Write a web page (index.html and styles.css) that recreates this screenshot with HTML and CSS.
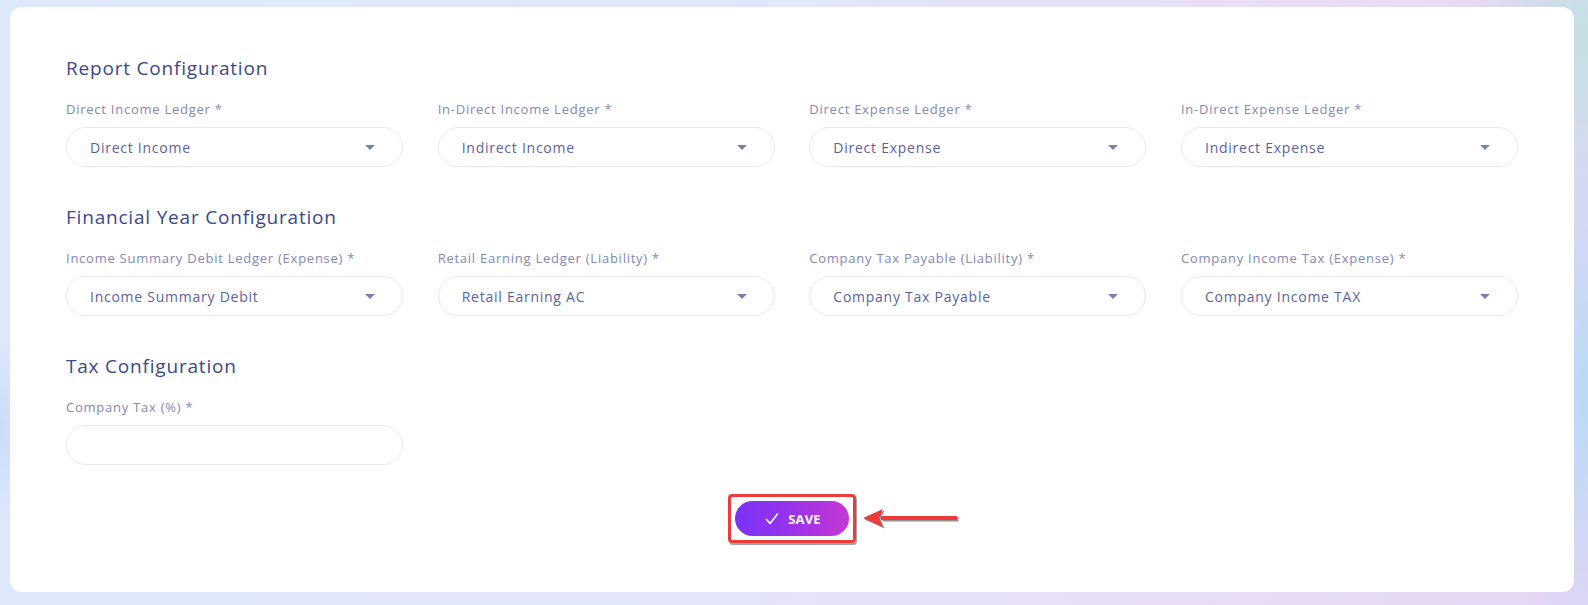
FILE: index.html
```html
<!DOCTYPE html>
<html lang="en">
<head>
<meta charset="utf-8">
<title>Configuration</title>
<link rel="stylesheet" href="styles.css">
</head>
<body>
<div class="page">
  <div class="card">
    <section class="section">
      <h2 class="section-title">Report Configuration</h2>
      <div class="grid">
        <div class="field">
          <label class="field-label">Direct Income Ledger *</label>
          <div class="select"><span class="select-value">Direct Income</span><span class="caret"></span></div>
        </div>
        <div class="field">
          <label class="field-label">In-Direct Income Ledger *</label>
          <div class="select"><span class="select-value">Indirect Income</span><span class="caret"></span></div>
        </div>
        <div class="field">
          <label class="field-label">Direct Expense Ledger *</label>
          <div class="select"><span class="select-value">Direct Expense</span><span class="caret"></span></div>
        </div>
        <div class="field">
          <label class="field-label">In-Direct Expense Ledger *</label>
          <div class="select"><span class="select-value">Indirect Expense</span><span class="caret"></span></div>
        </div>
      </div>
    </section>
    <section class="section">
      <h2 class="section-title">Financial Year Configuration</h2>
      <div class="grid">
        <div class="field">
          <label class="field-label">Income Summary Debit Ledger (Expense) *</label>
          <div class="select"><span class="select-value">Income Summary Debit</span><span class="caret"></span></div>
        </div>
        <div class="field">
          <label class="field-label">Retail Earning Ledger (Liability) *</label>
          <div class="select"><span class="select-value">Retail Earning AC</span><span class="caret"></span></div>
        </div>
        <div class="field">
          <label class="field-label">Company Tax Payable (Liability) *</label>
          <div class="select"><span class="select-value">Company Tax Payable</span><span class="caret"></span></div>
        </div>
        <div class="field">
          <label class="field-label">Company Income Tax (Expense) *</label>
          <div class="select"><span class="select-value">Company Income TAX</span><span class="caret"></span></div>
        </div>
      </div>
    </section>
    <section class="section">
      <h2 class="section-title">Tax Configuration</h2>
      <div class="grid">
        <div class="field">
          <label class="field-label">Company Tax (%) *</label>
          <input class="input" type="text">
        </div>
      </div>
    </section>
    <div class="actions">
      <div class="highlight">
        <button class="save-btn" type="button">
          <svg class="check" width="14" height="12" viewBox="0 0 14 12"><polyline points="1.5,6.5 5,10.5 12.5,1" fill="none" stroke="#fff" stroke-width="1.6" stroke-linecap="round" stroke-linejoin="round"/></svg>
          <span>SAVE</span>
        </button>
        <svg class="arrow" width="100" height="26" viewBox="0 0 100 26">
          <g transform="translate(1.5,1.5)" fill="#6f6f6f" opacity="0.75">
            <rect x="18" y="9" width="76" height="4"/>
            <polygon points="0,11 20,2 16,11 20,20"/>
          </g>
          <g fill="#ee3a3a">
            <rect x="18" y="9" width="76" height="4"/>
            <polygon points="0,11 20,2 16,11 20,20"/>
          </g>
        </svg>
      </div>
    </div>
  </div>
</div>
</body>
</html>
```

FILE: styles.css
```css
* { box-sizing: border-box; }

html, body {
  margin: 0;
  height: 605px;
  overflow: hidden;
}

body {
  font-family: "Open Sans", "Noto Sans", sans-serif;
  background:
    radial-gradient(ellipse 90px 260px at 1588px 390px, #b9d9f6 0%, rgba(185,217,246,0) 100%),
    radial-gradient(ellipse 120px 200px at 1588px 40px, #c3dfe3 0%, rgba(195,223,227,0) 100%),
    radial-gradient(ellipse 60px 90px at 0px 430px, #cadcfa 0%, rgba(202,220,250,0) 100%),
    linear-gradient(100deg, #dde8fb 0%, #e3e6fa 45%, #e9dcf4 80%, #e3d5f3 100%);
}

.page {
  padding: 7px 14px 13px 10px;
  height: 605px;
}

.card {
  background: #ffffff;
  border-radius: 12px;
  height: 585px;
  padding: 49px 56px 0;
}

.section + .section {
  margin-top: 38px;
}

.section-title {
  margin: 0 0 19px;
  font-size: 19px;
  line-height: 24px;
  font-weight: 500;
  letter-spacing: 0.8px;
  color: #3b488b;
}

.grid {
  display: grid;
  grid-template-columns: repeat(4, 1fr);
  column-gap: 34.67px;
}

.field {
  display: flex;
  flex-direction: column;
}

.field-label {
  font-size: 13px;
  line-height: 20px;
  font-weight: 500;
  letter-spacing: 0.75px;
  color: #8388b4;
  margin-bottom: 8px;
}

.select, .input {
  height: 40px;
  border: 1px solid #e7e9f2;
  border-radius: 20px;
  background: #fff;
}

.select {
  display: flex;
  align-items: center;
  justify-content: space-between;
  padding: 0 27px 0 23px;
}

.select-value {
  font-size: 14px;
  letter-spacing: 0.75px;
  color: #5a62a3;
}

.caret {
  width: 0;
  height: 0;
  border-left: 5px solid transparent;
  border-right: 5px solid transparent;
  border-top: 5px solid #7a7fae;
}

.input {
  width: 100%;
  font: inherit;
  outline: none;
}

.actions {
  display: flex;
  justify-content: center;
  margin-top: 29px;
}

.highlight {
  position: relative;
  border: 3px solid #ec3d3d;
  border-radius: 4px;
  padding: 4px;
  box-shadow: 1px 2px 0 rgba(90,90,90,0.55);
}

.save-btn {
  display: flex;
  align-items: center;
  justify-content: center;
  gap: 9px;
  width: 114px;
  height: 35px;
  border: 0;
  border-radius: 18px;
  background: linear-gradient(90deg, #7a33f6 0%, #9a32ea 50%, #c639d4 100%);
  color: #fff;
  font-family: inherit;
  font-size: 13px;
  font-weight: 700;
  letter-spacing: 0.2px;
  padding: 0 0 0 2px;
}

.arrow {
  position: absolute;
  left: 132px;
  top: 10px;
}
```
